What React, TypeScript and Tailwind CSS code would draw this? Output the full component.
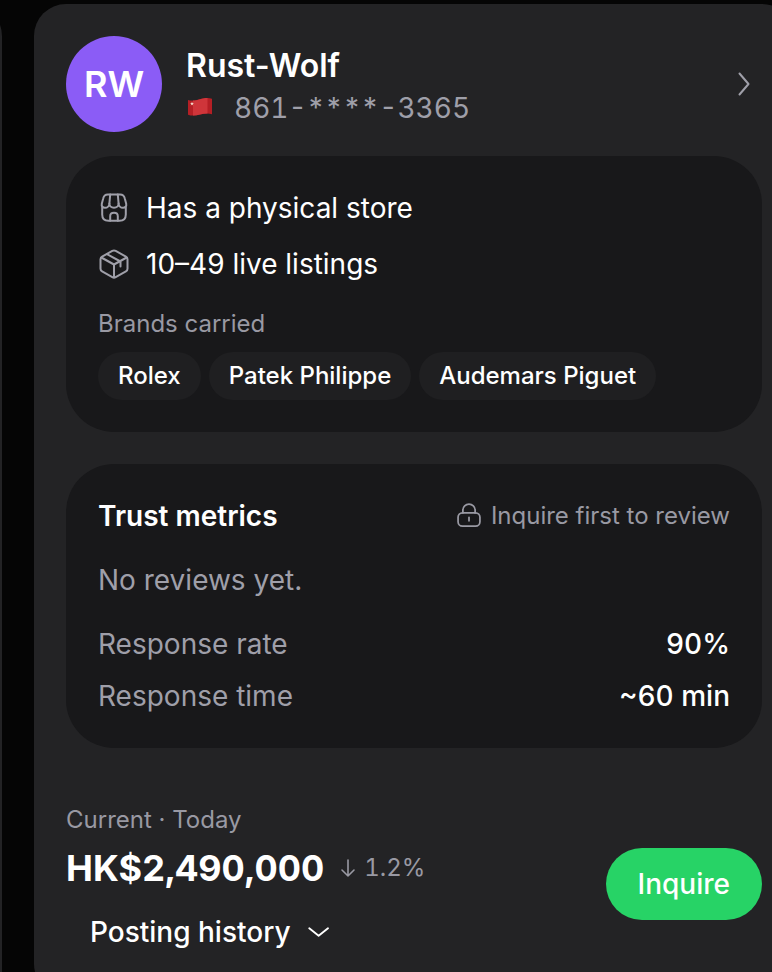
import { ReactNode } from "react";

const brands = ["Rolex", "Patek Philippe", "Audemars Piguet"];

const metrics = [
    { label: "Response rate", value: "90%" },
    { label: "Response time", value: "~60 min" },
];

interface IconProps {
    className?: string;
    strokeWidth?: number;
    children: ReactNode;
}

const Icon: React.FC<IconProps> = ({ className, strokeWidth = 2, children }) => (
    <svg
        className={className}
        viewBox="0 0 32 32"
        fill="none"
        stroke="currentColor"
        strokeWidth={strokeWidth}
        strokeLinecap="round"
        strokeLinejoin="round"
        aria-hidden="true"
    >
        {children}
    </svg>
);

const StoreIcon = () => (
    <Icon className="size-8 shrink-0 text-[#9f9fa9]">
        <path d="M4.200 15v7.500c0 4.500 1.800 6.300 6.300 6.300h11c4.500 0 6.300-1.800 6.300-6.300V15" />
        <path d="M9.800 2.600h12.400c2.700 0 4 1.300 4.600 3.900l1.400 5.200c.5 2.300-1 4.100-3.200 4.100-2.400 0-4.300-1.900-4.400-4.300 0 2.500-1.900 4.300-4.600 4.300s-4.600-1.800-4.600-4.300c-.1 2.400-2 4.300-4.400 4.300-2.200 0-3.700-1.800-3.200-4.100l1.400-5.200c.6-2.600 1.900-3.900 4.600-3.900z" />
        <path d="M12.200 2.600l-.8 8.900M19.800 2.600l.8 8.900" />
        <path d="M12.200 28.800v-4.600c0-2.100 1.100-3.400 3.800-3.400s3.800 1.300 3.800 3.400v4.600" />
    </Icon>
);

const BoxIcon = () => (
    <Icon className="size-8 shrink-0 text-[#9f9fa9]">
        <path d="M14.300 2.900a3.600 3.600 0 0 1 3.400 0l10.200 5.700c1.100.6 1.600 1.500 1.600 2.700v9.400c0 1.200-.5 2.100-1.600 2.700l-10.200 5.700a3.600 3.600 0 0 1-3.400 0L4.100 23.400c-1.100-.6-1.600-1.500-1.600-2.700v-9.400c0-1.200.5-2.100 1.600-2.700z" />
        <path d="M3.300 9.500L16 16.500l12.700-7M16 16.500v13M9 6.200l13.500 7.300v5" />
    </Icon>
);

const FlagIcon = () => (
    <svg className="h-6 w-7 shrink-0" viewBox="0 0 28 24" role="img" aria-label="China">
        <path d="M2 4c4 1.200 8 .2 12-.8s8-1.900 12-.4v15.500c-4-1.300-8-.8-12 .2s-8 1.600-12 .2z" fill="#b51f25" />
        <path d="M7 4.600c2.300 0 4.600-.6 7-1.400 2.600-.7 5-1.400 7.500-1.300v15.700c-2.500 0-5 .4-7.500.9-2.400.6-4.700 1-7 .9z" fill="#cf353a" />
        <path d="M6 5.700l.5 1.300 1.400.1-1.100.9.4 1.400L6 8.600l-1.200.8.4-1.400-1.100-.9 1.400-.1z" fill="#f3d9c8" />
    </svg>
);

const SellerHeader = () => (
    <a href="#seller" className="flex items-center gap-6">
        <div className="flex size-24 shrink-0 items-center justify-center rounded-full bg-[#8b5cf6] text-4xl font-semibold">
            RW
        </div>
        <div className="min-w-0 flex-1 pt-1">
            <h1 className="text-[32px] leading-11 font-semibold">Rust-Wolf</h1>
            <p className="flex items-center gap-5 text-[28px] leading-10 text-[#9f9fa9] tabular-nums">
                <FlagIcon />
                861-****-3365
            </p>
        </div>
        <Icon className="mr-1 size-8 shrink-0 text-[#9f9fa9]">
            <path d="M13.500 5.500l9 10.500-9 10.500" />
        </Icon>
    </a>
);

const StorePanel = () => (
    <section className="mt-6 rounded-[48px] bg-[#18181a] p-8">
        <ul className="flex flex-col gap-4 text-[28px] leading-10">
            <li className="flex items-center gap-4">
                <StoreIcon />
                Has a physical store
            </li>
            <li className="flex items-center gap-4">
                <BoxIcon />
                10–49 live listings
            </li>
        </ul>
        <h2 className="mt-6 text-2xl text-[#9999a3]">Brands carried</h2>
        <ul className="mt-3 flex flex-wrap gap-2">
            {brands.map(brand => (
                <li key={brand} className="rounded-full bg-[#1f1f21] px-5 py-2 text-2xl font-medium">
                    {brand}
                </li>
            ))}
        </ul>
    </section>
);

const TrustPanel = () => (
    <section className="mt-8 rounded-[48px] bg-[#18181a] p-8 text-[28px] leading-10">
        <div className="flex items-center justify-between">
            <h2 className="font-semibold">Trust metrics</h2>
            <p className="flex items-center gap-2 text-2xl leading-10 text-[#9999a3]">
                <Icon className="size-7 shrink-0">
                    <rect x="3.500" y="12.500" width="25" height="15" rx="5" />
                    <path d="M9 12.500V9.500a7 7 0 0 1 14 0v3M16 17.500v4" />
                </Icon>
                Inquire first to review
            </p>
        </div>
        <p className="mt-6 text-[#9f9fa9]">No reviews yet.</p>
        <dl className="mt-6 flex flex-col gap-3">
            {metrics.map(item => (
                <div key={item.label} className="flex justify-between">
                    <dt className="text-[#9f9fa9]">{item.label}</dt>
                    <dd className="font-medium tabular-nums">{item.value}</dd>
                </div>
            ))}
        </dl>
    </section>
);

const PriceFooter = () => (
    <footer className="mt-14 flex items-center justify-between">
        <div>
            <p className="text-2xl text-[#9999a3]">Current · Today</p>
            <div className="mt-2 flex items-center gap-4">
                <span className="text-4xl leading-12 font-bold tabular-nums">HK$2,490,000</span>
                <span className="flex items-center gap-2 text-2xl text-[#9999a3] tabular-nums">
                    <svg className="h-5 w-4" viewBox="0 0 16 20" fill="none" stroke="currentColor" strokeWidth="1.6" strokeLinecap="round" strokeLinejoin="round" aria-hidden="true">
                        <path d="M8 2v16M2 12l6 6 6-6" />
                    </svg>
                    1.2%
                </span>
            </div>
            <button type="button" className="mt-2 flex h-16 items-center gap-4 px-6 text-[28px] font-medium">
                Posting history
                <Icon className="size-6" strokeWidth={2.5}>
                    <path d="M3 11l12.500 10L28 11" />
                </Icon>
            </button>
        </div>
        <button type="button" className="h-18 rounded-full bg-[#27d366] px-8 text-[28px] font-medium">
            Inquire
        </button>
    </footer>
);

const App: React.FC = () => {
    return (
        <main className="flex h-screen items-start gap-8 overflow-hidden bg-[#050505] pt-1 font-['Inter',sans-serif] text-white">
            {/* neighbours in the carousel peek in at the edges */}
            <div className="-ml-16 h-full w-[66px] shrink-0 rounded-t-[32px] bg-[#232325]" />
            <article className="-mr-[22px] min-w-0 flex-1 rounded-[32px] bg-[#232325] p-8">
                <SellerHeader />
                <StorePanel />
                <TrustPanel />
                <PriceFooter />
            </article>
        </main>
    );
};

export default App;
